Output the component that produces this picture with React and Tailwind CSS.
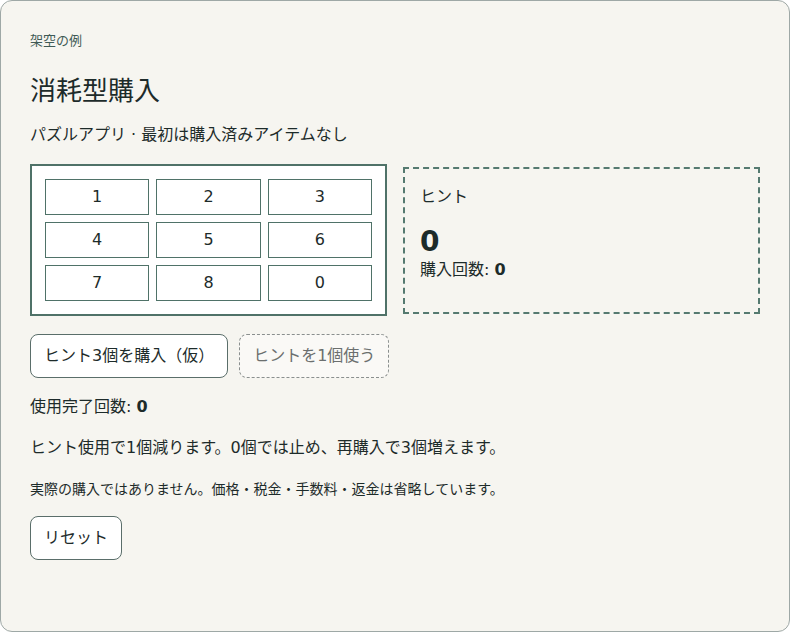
import { useState } from "react";

const KEYS = ["1", "2", "3", "4", "5", "6", "7", "8", "0"];

export default function App() {
  const [hints, setHints] = useState(0);
  const [bought, setBought] = useState(0);
  const [used, setUsed] = useState(0);

  const buy = () => {
    setHints((h) => h + 3);
    setBought((b) => b + 1);
  };

  const useHint = () => {
    if (hints === 0) return;
    setHints((h) => h - 1);
    setUsed((u) => u + 1);
  };

  const reset = () => {
    setHints(0);
    setBought(0);
    setUsed(0);
  };

  return (
    <div
      className="min-h-screen bg-white text-[#1d2b2a]"
      style={{ fontFamily: '"DejaVu Sans", "Noto Sans CJK JP", sans-serif' }}
    >
      <div className="min-h-[632px] rounded-[12px] border border-[#9ea8a6] bg-[#f6f5f0] px-[29px] pt-[31px] pb-8">
        <p className="text-[13px] leading-[18px] text-[#3f5a55]">架空の例</p>

        <h1 className="mt-[24px] text-[26px] leading-[34px]">消耗型購入</h1>

        <p className="mt-[16px] text-[16px] leading-[22px]">
          パズルアプリ · 最初は購入済みアイテムなし
        </p>

        {/* PUZZLE + HINT PANEL */}
        <div className="mt-[18px] grid grid-cols-2 items-center gap-4">
          <div className="border-2 border-[#4f7268] bg-white p-[13px]">
            <div className="grid grid-cols-3 gap-[7px]">
              {KEYS.map((k) => (
                <button
                  key={k}
                  className="h-[36px] border border-[#4f7268] bg-white text-[16px] text-[#1d2b2a]"
                >
                  {k}
                </button>
              ))}
            </div>
          </div>

          <div className="h-[147px] border-2 border-dashed border-[#557a70] px-[15px] pt-[17px]">
            <p className="text-[16px] leading-[22px]">ヒント</p>
            <p className="mt-[19px] text-[28px] font-bold leading-[30px]">
              {hints}
            </p>
            <p className="mt-[2px] text-[16px] leading-[22px]">
              購入回数: <b>{bought}</b>
            </p>
          </div>
        </div>

        {/* ACTIONS */}
        <div className="mt-[18px] flex gap-[11px]">
          <button
            onClick={buy}
            className="h-[44px] rounded-[8px] border border-[#5a6e6a] bg-white px-[13px] text-[16px] text-[#1d2b2a]"
          >
            ヒント3個を購入（仮）
          </button>
          <button
            onClick={useHint}
            disabled={hints === 0}
            className="h-[44px] rounded-[8px] border border-dashed border-[#8a8f8e] bg-[#faf9f6] px-[13px] text-[16px] text-[#6b6f6e]"
          >
            ヒントを1個使う
          </button>
        </div>

        <p className="mt-[18px] text-[16px] leading-[22px]">
          使用完了回数: <b>{used}</b>
        </p>

        <p className="mt-[19px] text-[16px] leading-[22px]">
          ヒント使用で1個減ります。0個では止め、再購入で3個増えます。
        </p>

        <p className="mt-[20px] text-[14px] leading-[20px]">
          実際の購入ではありません。価格・税金・手数料・返金は省略しています。
        </p>

        <button
          onClick={reset}
          className="mt-[17px] h-[44px] rounded-[8px] border border-[#5a6e6a] bg-white px-[13px] text-[16px] text-[#1d2b2a]"
        >
          リセット
        </button>
      </div>
    </div>
  );
}
